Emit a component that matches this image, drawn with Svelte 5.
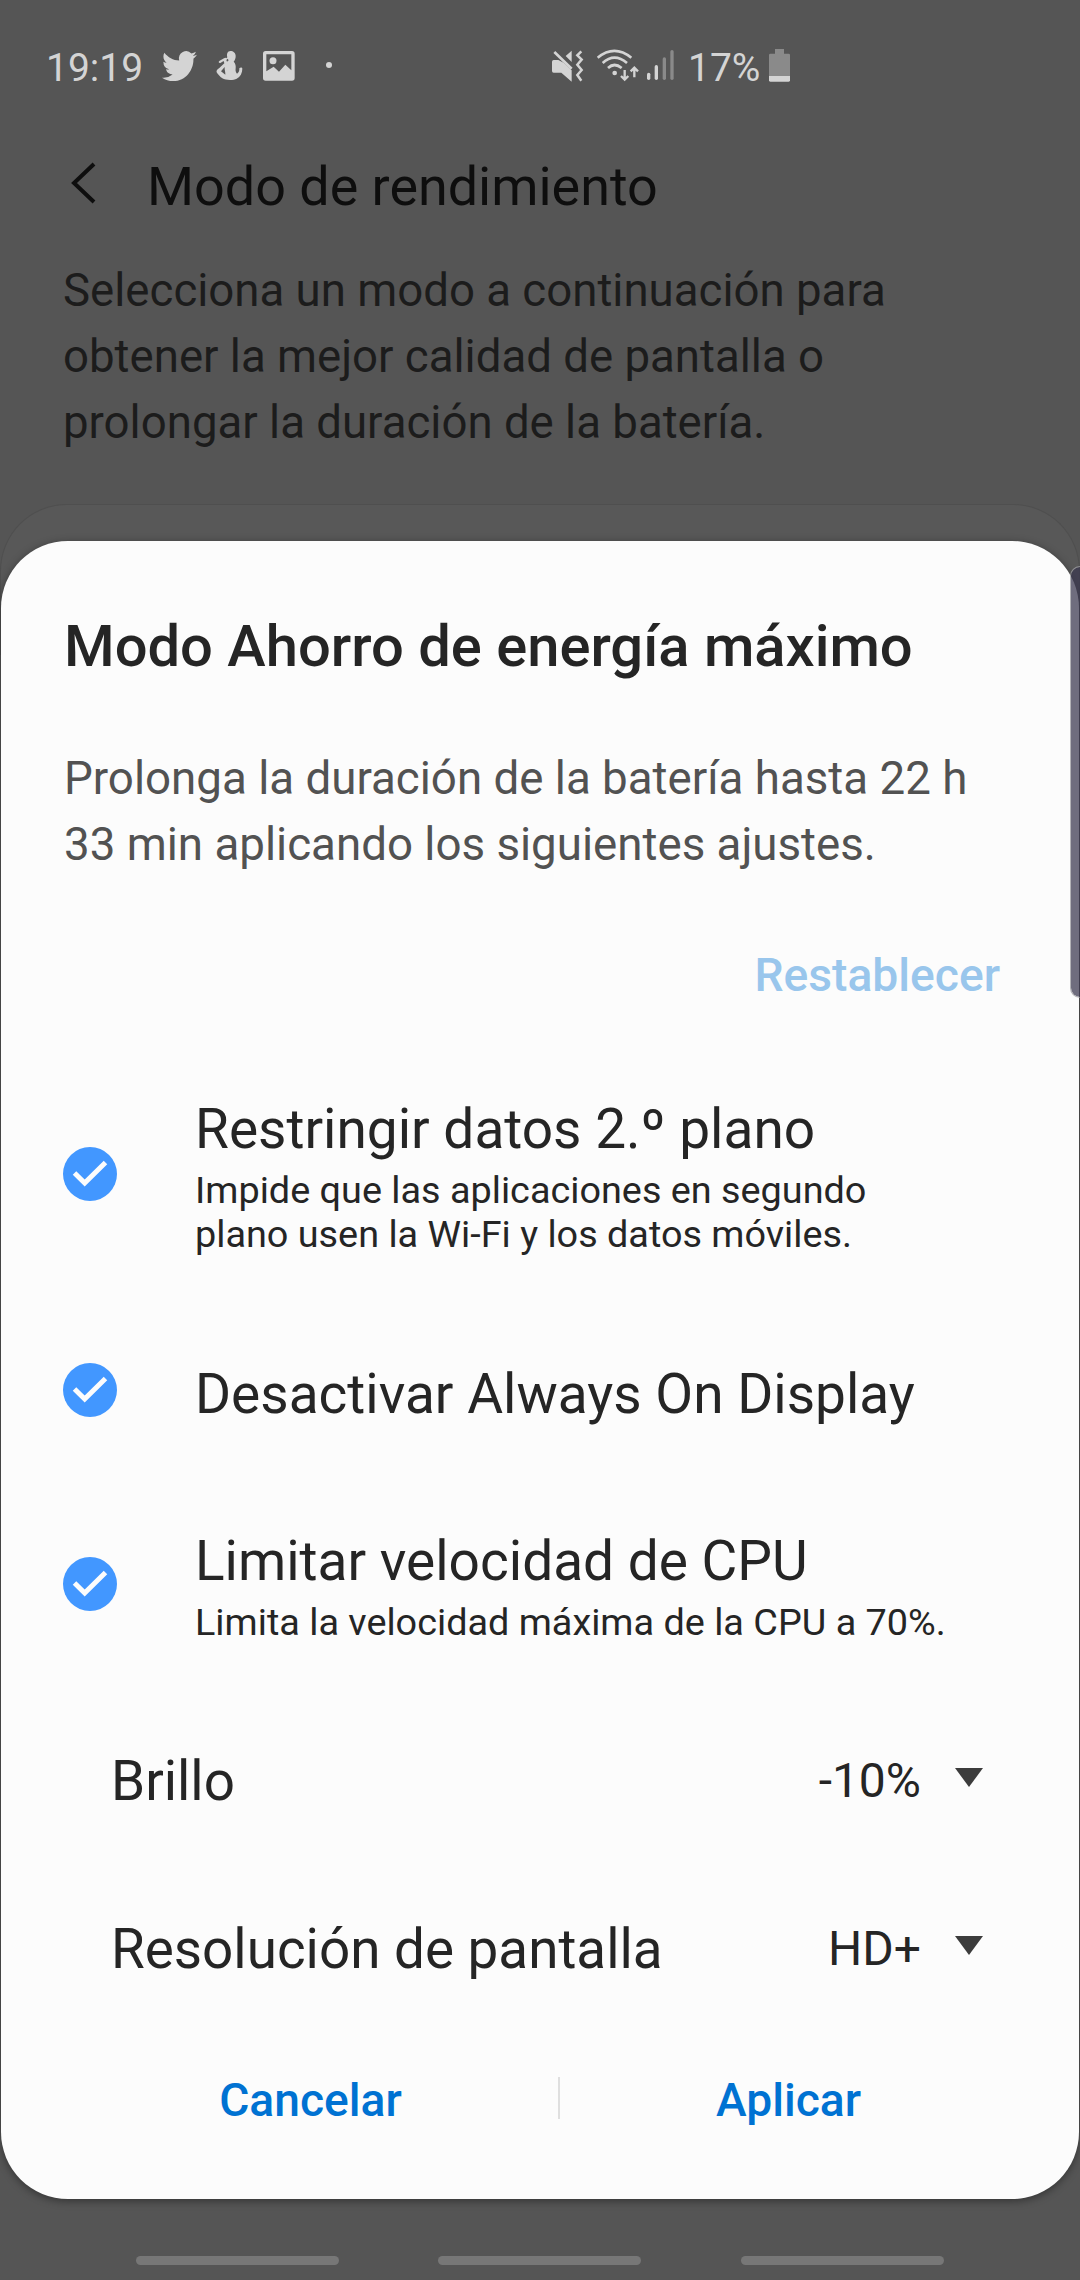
<script lang="ts">
  type Option = { title: string; lines: string[]; checked: boolean };

  let options: Option[] = $state([
    {
      title: 'Restringir datos 2.º plano',
      lines: ['Impide que las aplicaciones en segundo', 'plano usen la Wi-Fi y los datos móviles.'],
      checked: true
    },
    { title: 'Desactivar Always On Display', lines: [], checked: true },
    {
      title: 'Limitar velocidad de CPU',
      lines: ['Limita la velocidad máxima de la CPU a 70%.'],
      checked: true
    }
  ]);

  const selects = [
    { label: 'Brillo', value: '-10%' },
    { label: 'Resolución de pantalla', value: 'HD+' }
  ];
</script>

<div class="screen">
  <div class="status-bar">
    <span class="time">19:19</span>
    <svg class="twitter" viewBox="0 2.1 24 19.6" preserveAspectRatio="none">
      <path d="M23.953 4.57a10 10 0 01-2.825.775 4.958 4.958 0 002.163-2.723c-.951.555-2.005.959-3.127 1.184a4.92 4.92 0 00-8.384 4.482C7.69 8.095 4.067 6.13 1.64 3.162a4.822 4.822 0 00-.666 2.475c0 1.71.87 3.213 2.188 4.096a4.904 4.904 0 01-2.228-.616v.06a4.923 4.923 0 003.946 4.827 4.996 4.996 0 01-2.212.085 4.936 4.936 0 004.604 3.417 9.867 9.867 0 01-6.102 2.105c-.39 0-.779-.023-1.17-.067a13.995 13.995 0 007.557 2.209c9.053 0 13.998-7.496 13.998-13.985 0-.21 0-.42-.015-.63A9.935 9.935 0 0024 4.59z" />
    </svg>
    <svg class="figure" viewBox="0 0 81 93">
      <path d="M43 3c9 0 16 6 16 15 0 7-2 12-6 17 5 5 7 12 6 20-1 7 0 12 4 16 5-3 7-8 7-13-2-5 8-8 9-2 0 13-6 24-17 30-9 5-33 5-43-1C12 80 5 73 2 67c-2-5 2-9 8-13l15-14-2-7-10 6c-5 1-7-5-2-7l13-7c4-2 6-2 7 0l3-3c-3-10 1-19 9-19z" />
      <path class="cut" d="M26 51L15 64l13 10c1-7-3-14-2-23zM31 30l4-4 3 5-5 4z" />
    </svg>
    <svg class="gallery" viewBox="0 0 96 90">
      <path fill-rule="evenodd" d="M8 0h79q8 0 8 8v73q0 8-8 8H8q-8 0-8-8V8q0-8 8-8zM10 10v51l22-14 16 15 19-21 18 17V10z" />
      <circle cx="30" cy="29" r="10.5" />
    </svg>
    <span class="more-dot"></span>

    <div class="system-icons">
      <svg class="mute" viewBox="0 0 93 96">
        <path d="M5 30h14L35 38 59 61v34L28 68H5q-5 0-5-5V35q0-5 5-5zM59 2v34L41 18z" />
        <path class="line" d="M7 6l52 50" stroke-width="8" />
        <path class="line" d="M88 4L76 16l13 13-13 15 13 16-13 15 12 17" stroke-width="7.5" />
      </svg>
      <svg class="wifi" viewBox="0 0 126 96">
        <path class="line" d="M2 26q50-41 101 0M17 42q35-32 73 0M33 57q19-18 41 0" stroke-width="8" />
        <circle cx="53" cy="72" r="7" />
        <path class="line" d="M83 63v28M72 81l11 11 11-11M112 85V58M101 67l11-11 11 11" stroke-width="7" />
      </svg>
      <svg class="signal" viewBox="0 0 81 90">
        <rect x="0" y="68" width="10" height="22" rx="5" />
        <rect x="23" y="45" width="10" height="45" rx="5" />
        <rect class="dim" x="47" y="22" width="10" height="68" rx="5" />
        <rect class="dim" x="70" y="0" width="10" height="90" rx="5" />
      </svg>
      <span class="percent">17%</span>
      <svg class="battery" viewBox="0 0 63 99">
        <path class="dim" d="M18 0h27v14h14q4 0 4 4v63H0V18q0-4 4-4h14z" />
        <path d="M0 81h63v13q0 4-4 4H4q-4 0-4-4z" />
      </svg>
    </div>
  </div>

  <header class="app-bar">
    <svg class="back" viewBox="0 0 27 42"><path d="M24 2L4 21l20 19" /></svg>
    <h1>Modo de rendimiento</h1>
  </header>
  <p class="intro">
    Selecciona un modo a continuación para<br />
    obtener la mejor calidad de pantalla o<br />
    prolongar la duración de la batería.
  </p>
  <div class="card-behind"></div>

  <nav class="nav-hints">
    <span></span>
    <span></span>
    <span></span>
  </nav>

  <section class="dialog">
    <h2>Modo Ahorro de energía máximo</h2>
    <p class="message">
      Prolonga la duración de la batería hasta 22 h<br />
      33 min aplicando los siguientes ajustes.
    </p>
    <button class="reset">Restablecer</button>

    <div class="options">
      {#each options as option}
        <button
          class="option"
          class:single={!option.lines.length}
          onclick={() => (option.checked = !option.checked)}
        >
          <svg class="check" class:off={!option.checked} viewBox="0 0 54 54">
            <circle cx="27" cy="27" r="27" />
            <path d="M11.5 26L21.7 36 42.5 15.5" />
          </svg>
          <span class="option-text">
            <span class="option-title">{option.title}</span>
            {#each option.lines as line}
              <span class="option-line">{line}</span>
            {/each}
          </span>
        </button>
      {/each}
    </div>

    <div class="selects">
      {#each selects as item}
        <div class="select">
          <span class="select-label">{item.label}</span>
          <span class="select-value">{item.value}</span>
          <svg class="arrow" viewBox="0 0 28 19"><path d="M0 0h28L14 19z" /></svg>
        </div>
      {/each}
    </div>

    <div class="actions">
      <button>Cancelar</button>
      <span class="divider"></span>
      <button>Aplicar</button>
    </div>
  </section>

  <div class="edge-handle"></div>
</div>

<style>
  :global(body) { margin: 0; background: #555; }

  .screen {
    position: relative;
    display: flex;
    flex-direction: column;
    width: 1080px;
    height: 2280px;
    overflow: hidden;
    background: #555;
    font-family: Roboto, sans-serif;
  }

  h1, h2, p { margin: 0; font-weight: 400; white-space: nowrap; }
  svg { display: block; flex: none; overflow: visible; }
  button { padding: 0; border: 0; background: none; font: inherit; color: inherit; text-align: left; white-space: nowrap; }

  .status-bar {
    display: flex;
    align-items: flex-start;
    height: 104px;
    padding: 50px 0 0 46px;
    box-sizing: border-box;
    color: #d4d4d4;
    fill: #d4d4d4;
  }
  .time, .percent { font-size: 39px; line-height: 36px; }
  .time { width: 116px; }
  .twitter { width: 35px; height: 30px; margin-top: 1px; }
  .figure { width: 27px; height: 31px; margin: 0 0 0 19px; }
  .figure .cut { fill: #555; }
  .gallery { width: 32px; height: 30px; margin: 1px 0 0 20px; }
  .more-dot { width: 6px; height: 6px; margin: 12px 0 0 31px; border-radius: 50%; background: #d4d4d4; }
  .system-icons { display: flex; align-items: flex-start; margin-left: 220px; }
  .line { fill: none; stroke: #d4d4d4; }
  .dim { fill: #8a8a8a; }
  .mute { width: 31px; height: 32px; }
  .wifi { width: 42px; height: 32px; margin: -1px 0 0 14px; }
  .signal { width: 27px; height: 30px; margin-left: 8px; }
  .percent { width: 81px; margin-left: 14px; }
  .battery { width: 21px; height: 33px; margin-top: -1px; }

  .app-bar { display: flex; align-items: flex-start; height: 154px; padding: 50px 0 0 70px; box-sizing: border-box; }
  .back { width: 27px; height: 42px; margin-top: 8px; fill: none; stroke: #0e0e0e; stroke-width: 4; }
  .app-bar h1 { margin-left: 50px; font-size: 53.9px; line-height: 66px; color: #0e0e0e; }

  .intro { padding-left: 63px; font-size: 45.6px; line-height: 66px; color: #1c1c1c; }

  .card-behind {
    height: 150px;
    margin-top: 48px;
    border: 1px solid #4f4f4f;
    border-bottom: 0;
    border-radius: 67px 67px 0 0;
    background: #585858;
  }

  .nav-hints { display: flex; gap: 99.3px; margin: auto 0 15px 136px; }
  .nav-hints span { width: 203px; height: 9px; border-radius: 5px; background: #777; }

  .dialog {
    position: absolute;
    inset: 541px 1px auto;
    height: 1658px;
    box-sizing: border-box;
    padding-top: 65px;
    border-radius: 67px;
    background: #fcfcfc;
    box-shadow: 0 2px 8px rgba(0, 0, 0, 0.4);
    color: #252525;
  }
  .dialog h2 { padding-left: 63px; font-size: 57.9px; font-weight: 500; line-height: 80px; }
  .message { padding: 60px 0 0 63px; font-size: 45.7px; line-height: 66px; color: #525252; }
  .reset { display: block; margin: 64px 79px 0 auto; font-size: 46.2px; font-weight: 500; line-height: 66px; color: #99c6ec; }

  .options { display: flex; flex-direction: column; gap: 93.5px; padding: 84px 0 0 62px; }
  .option { display: flex; align-items: center; }
  .check { width: 54px; height: 54px; }
  .check circle { fill: #4297ff; }
  .check path { fill: none; stroke: #fcfcfc; stroke-width: 5; }
  .check.off circle { fill: #c4c4c4; }
  .option-text { display: flex; flex-direction: column; margin-left: 78px; }
  .option-title { margin-bottom: 2px; font-size: 55px; line-height: 74px; }
  .single .option-title { margin: 7px 0 0; }
  .option-line { font-size: 37.8px; line-height: 44px; }

  .selects { padding: 53px 96px 0 110px; }
  .select { display: flex; align-items: center; height: 168px; }
  .select-label { flex: 1; font-size: 54.8px; }
  .select-value { margin-top: -2px; font-size: 48px; }
  .arrow { width: 28px; height: 19px; margin: -8px 0 0 34px; fill: #3c3c3c; }

  .actions { display: grid; grid-template-columns: 495px 2px 457px; align-items: center; padding: 34px 0 0 62px; color: #0072d2; }
  .actions button { font-size: 46.2px; font-weight: 500; line-height: 66px; text-align: center; }
  .divider { height: 42px; margin-top: -4px; background: #dfdfdf; }

  .edge-handle {
    position: absolute;
    top: 566px;
    right: -10px;
    width: 18px;
    height: 430px;
    border: 1.5px solid rgba(160, 160, 165, 0.8);
    border-radius: 12px;
    background: rgba(59, 56, 79, 0.73);
    background-clip: padding-box;
  }
</style>
